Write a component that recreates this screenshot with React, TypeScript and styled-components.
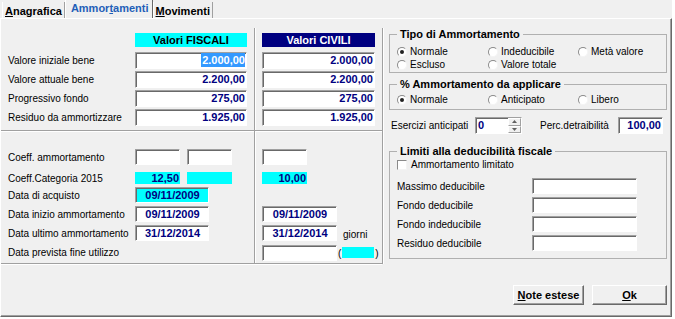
import React from "react";
import styled, { createGlobalStyle } from "styled-components";

const GlobalStyle = createGlobalStyle`
  html, body { margin: 0; padding: 0; background: #fff; }
  body {
    font-family: "Liberation Sans", Arial, sans-serif;
    font-size: 10px;
    color: #000;
  }
  * { box-sizing: border-box; }
`;

const NAVY = "#000080";
const CYAN = "#00ffff";

const Window = styled.div`
  width: 672px;
  height: 317px;
  background: #f0f0f0;
  display: flex;
  flex-direction: column;
`;

//tabs
const TabStrip = styled.div`
  height: 18px;
  display: flex;
  align-items: flex-end;
  padding-left: 2px;
`;

const Tab = styled.div<{ $active?: boolean }>`
  height: ${p => (p.$active ? 18 : 16)}px;
  padding: ${p => (p.$active ? "2px 3px 0 5px" : "3px 2px 0 2px")};
  line-height: 12px;
  font-size: 11px;
  font-weight: bold;
  white-space: nowrap;
  color: ${p => (p.$active ? "#1f5fb8" : "#000")};
  border-left: 1px solid #fff;
  border-right: 1px solid ${p => (p.$active ? "#696969" : "#a0a0a0")};
`;

const Panel = styled.div`
  flex: 1;
  display: flex;
  align-items: flex-start;
  padding-top: 9px;
  border-top: 1px solid #fff;
  border-left: 1px solid #fff;
  border-right: 1px solid #696969;
  border-bottom: 1px solid #696969;
  box-shadow: inset -1px -1px 0 #a0a0a0;
`;

//left side
const LeftSection = styled.div`
  width: 382px;
  display: flex;
  flex-direction: column;
  border-right: 1px solid #a0a0a0;
  box-shadow: 1px 0 0 #fff;
`;

const Block = styled.div<{ $gap: number; $pad: string }>`
  display: flex;
  flex-direction: column;
  gap: ${p => p.$gap}px;
  padding: ${p => p.$pad};
  border-bottom: 1px solid #a0a0a0;
  box-shadow: 0 1px 0 #fff;
  background: linear-gradient(
    to right,
    transparent 253px,
    #a0a0a0 253px,
    #a0a0a0 254px,
    #fff 254px,
    #fff 255px,
    transparent 255px
  );
`;

const Row = styled.div<{ $mb?: number }>`
  display: grid;
  grid-template-columns: 134px 127px 120px;
  align-items: center;
  margin-bottom: ${p => p.$mb ?? 0}px;
`;

const Label = styled.div`
  padding-left: 7px;
  white-space: nowrap;
  align-self: stretch;
  display: flex;
  align-items: center;
`;

const Cell = styled.div<{ $end?: boolean }>`
  display: flex;
  align-items: ${p => (p.$end ? "flex-end" : "center")};
  gap: 7px;
  align-self: stretch;
`;

const Header = styled.div<{ $dark?: boolean; $w: number }>`
  width: ${p => p.$w}px;
  height: 14px;
  line-height: 14px;
  text-align: center;
  font-size: 11px;
  font-weight: bold;
  background: ${p => (p.$dark ? NAVY : CYAN)};
  color: ${p => (p.$dark ? "#fff" : "#000")};
`;

const Field = styled.div<{ $w: number; $h?: number; $align?: string; $bg?: string }>`
  width: ${p => p.$w}px;
  height: ${p => p.$h ?? 17}px;
  line-height: ${p => (p.$h ?? 17) - 2}px;
  padding: 0 1px 0 2px;
  text-align: ${p => p.$align ?? "right"};
  font-size: 11px;
  font-weight: bold;
  color: ${NAVY};
  background: ${p => p.$bg ?? "#fff"};
  border: 1px solid;
  border-color: #a0a0a0 #fff #fff #a0a0a0;
  box-shadow: inset 1px 1px 0 #696969;
  white-space: nowrap;
  overflow: hidden;
`;

const FlatBox = styled.div<{ $w: number; $h: number }>`
  width: ${p => p.$w}px;
  height: ${p => p.$h}px;
  line-height: ${p => p.$h}px;
  background: ${CYAN};
  color: ${NAVY};
  font-size: 11px;
  font-weight: bold;
  text-align: right;
  padding-right: 1px;
`;

const Selected = styled.span`
  background: #3399ff;
  color: #fff;
  padding: 1px 0 1px 1px;
`;

const Note = styled.span<{ $ml?: number }>`
  margin-left: ${p => p.$ml ?? 0}px;
  line-height: 11px;
  margin-bottom: 1px;
`;

const Paren = styled.span`
  line-height: 14px;
  padding-top: 3px;
`;

const Inline = styled.div`
  display: flex;
  align-items: center;
  gap: 1px;
`;

//right side
const RightSection = styled.div`
  width: 278px;
  margin-left: 6px;
  display: flex;
  flex-direction: column;
`;

const Group = styled.fieldset<{ $pt: number; $pb: number; $mt: number }>`
  margin: ${p => p.$mt}px 0 0 0;
  padding: ${p => p.$pt}px 4px ${p => p.$pb}px 7px;
  border: 1px solid #b0b0b0;
  min-width: 0;
`;

const Legend = styled.legend`
  font-size: 11px;
  font-weight: bold;
  line-height: 13px;
  padding: 0 3px 0 3px;
`;

const RadioGrid = styled.div`
  display: grid;
  grid-template-columns: 91px 90px auto;
  grid-auto-rows: 13px;
`;

const Choice = styled.label`
  display: flex;
  align-items: center;
  white-space: nowrap;
  height: 13px;
`;

const RadioMark = styled.span<{ $checked?: boolean }>`
  width: 10px;
  height: 10px;
  border-radius: 50%;
  border: 1px solid;
  border-color: #8a8a8a #f4f4f4 #f4f4f4 #8a8a8a;
  background: #fff;
  display: inline-flex;
  align-items: center;
  justify-content: center;
  margin-right: 3px;
  &::after {
    content: "";
    width: 4px;
    height: 4px;
    border-radius: 50%;
    background: ${p => (p.$checked ? "#222" : "transparent")};
  }
`;

const CheckMark = styled.span`
  width: 10px;
  height: 10px;
  border: 1px solid;
  border-color: #8a8a8a #f4f4f4 #f4f4f4 #8a8a8a;
  background: #fff;
  margin-right: 4px;
`;

const InlineRow = styled.div<{ $mt: number }>`
  display: flex;
  align-items: center;
  height: 17px;
  margin-top: ${p => p.$mt}px;
  padding-left: 2px;
`;

const InlineLabel = styled.span<{ $w: number; $ml?: number }>`
  width: ${p => p.$w}px;
  margin-left: ${p => p.$ml ?? 0}px;
  white-space: nowrap;
`;

const SpinField = styled(Field)`
  display: flex;
  padding: 0;
  text-align: left;
`;

const SpinValue = styled.span`
  flex: 1;
  padding-left: 2px;
`;

const SpinButtons = styled.div`
  width: 13px;
  display: flex;
  flex-direction: column;
`;

const SpinButton = styled.div`
  flex: 1;
  display: flex;
  align-items: center;
  justify-content: center;
  background: #f0f0f0;
  border: 1px solid;
  border-color: #fff #a0a0a0 #a0a0a0 #fff;
`;

const LimitRows = styled.div`
  display: flex;
  flex-direction: column;
  gap: 3px;
  margin-top: 7px;
`;

const LimitRow = styled.div`
  display: grid;
  grid-template-columns: 135px 105px;
  align-items: center;
`;

const ButtonBar = styled.div`
  display: flex;
  justify-content: flex-end;
  gap: 8px;
  margin-top: 26px;
`;

const Button = styled.button<{ $w: number }>`
  width: ${p => p.$w}px;
  height: 20px;
  padding: 0;
  font-family: inherit;
  font-size: 11px;
  font-weight: bold;
  color: #000;
  background: #f0f0f0;
  border: 1px solid;
  border-color: #fff #696969 #696969 #fff;
  box-shadow: inset -1px -1px 0 #a0a0a0;
`;

const Arrow = ({ up }: { up?: boolean }) => (
  <svg width="5" height="3" viewBox="0 0 5 3">
    <polygon points={up ? "2.5,0 5,3 0,3" : "0,0 5,0 2.5,3"} fill="#606060" />
  </svg>
);

const Radio = ({ label, checked }: { label: string; checked?: boolean }) => (
  <Choice>
    <RadioMark $checked={checked} />
    {label}
  </Choice>
);

const topRows = [
  { label: "Valore iniziale bene", fiscal: "2.000,00", civil: "2.000,00" },
  { label: "Valore attuale bene", fiscal: "2.200,00", civil: "2.200,00" },
  { label: "Progressivo fondo", fiscal: "275,00", civil: "275,00" },
  { label: "Residuo da ammortizzare", fiscal: "1.925,00", civil: "1.925,00" },
];

const limits = ["Massimo deducibile", "Fondo deducibile", "Fondo indeducibile", "Residuo deducibile"];

export default function App() {
  return (
    <>
      <GlobalStyle />
      <Window>
        <TabStrip>
          <Tab><u>A</u>nagrafica</Tab>
          <Tab $active>Ammor<u>t</u>amenti</Tab>
          <Tab><u>M</u>ovimenti</Tab>
        </TabStrip>
        <Panel>
          <LeftSection>
            <Block $gap={2} $pad="5px 0 4px">
              <Row $mb={3}>
                <span />
                <Cell><Header $w={112}>Valori FISCALI</Header></Cell>
                <Cell><Header $w={113} $dark>Valori CIVILI</Header></Cell>
              </Row>
              {topRows.map((r, i) => (
                <Row key={r.label}>
                  <Label>{r.label}</Label>
                  <Cell>
                    <Field $w={112}>{i === 0 ? <Selected>{r.fiscal}</Selected> : r.fiscal}</Field>
                  </Cell>
                  <Cell><Field $w={113}>{r.civil}</Field></Cell>
                </Row>
              ))}
            </Block>
            <Block $gap={3} $pad="18px 0 2px">
              <Row $mb={4}>
                <Label>Coeff. ammortamento</Label>
                <Cell>
                  <Field $w={45} $h={16} />
                  <Field $w={45} $h={16} />
                </Cell>
                <Cell><Field $w={45} $h={16} /></Cell>
              </Row>
              <Row>
                <Label>Coeff.Categoria 2015</Label>
                <Cell>
                  <FlatBox $w={45} $h={12}>12,50</FlatBox>
                  <FlatBox $w={45} $h={12} />
                </Cell>
                <Cell><FlatBox $w={45} $h={12}>10,00</FlatBox></Cell>
              </Row>
              <Row>
                <Label>Data di acquisto</Label>
                <Cell><Field $w={74} $h={16} $align="center" $bg={CYAN}>09/11/2009</Field></Cell>
                <span />
              </Row>
              <Row>
                <Label>Data inizio ammortamento</Label>
                <Cell><Field $w={74} $h={16} $align="center">09/11/2009</Field></Cell>
                <Cell><Field $w={75} $h={16} $align="center">09/11/2009</Field></Cell>
              </Row>
              <Row>
                <Label>Data ultimo ammortamento</Label>
                <Cell><Field $w={74} $h={16} $align="center">31/12/2014</Field></Cell>
                <Cell $end>
                  <Field $w={75} $h={16} $align="center">31/12/2014</Field>
                  <Note $ml={-1}>giorni</Note>
                </Cell>
              </Row>
              <Row>
                <Label>Data prevista fine utilizzo</Label>
                <span />
                <Inline>
                  <Field $w={75} $h={16} />
                  <Paren>(</Paren>
                  <FlatBox $w={32} $h={11} />
                  <Paren>)</Paren>
                </Inline>
              </Row>
            </Block>
          </LeftSection>

          <RightSection>
            <Group $mt={0} $pt={4} $pb={1}>
              <Legend>Tipo di Ammortamento</Legend>
              <RadioGrid>
                <Radio label="Normale" checked />
                <Radio label="Indeducibile" />
                <Radio label="Metà valore" />
                <Radio label="Escluso" />
                <Radio label="Valore totale" />
              </RadioGrid>
            </Group>
            <Group $mt={5} $pt={2} $pb={3}>
              <Legend>% Ammortamento da applicare</Legend>
              <RadioGrid>
                <Radio label="Normale" checked />
                <Radio label="Anticipato" />
                <Radio label="Libero" />
              </RadioGrid>
            </Group>
            <InlineRow $mt={7}>
              <InlineLabel $w={84}>Esercizi anticipati</InlineLabel>
              <SpinField $w={47}>
                <SpinValue>0</SpinValue>
                <SpinButtons>
                  <SpinButton><Arrow up /></SpinButton>
                  <SpinButton><Arrow /></SpinButton>
                </SpinButtons>
              </SpinField>
              <InlineLabel $w={78} $ml={18}>Perc.detraibilità</InlineLabel>
              <Field $w={45}>100,00</Field>
            </InlineRow>
            <Group $mt={11} $pt={0} $pb={7}>
              <Legend>Limiti alla deducibilità fiscale</Legend>
              <Choice>
                <CheckMark />
                Ammortamento limitato
              </Choice>
              <LimitRows>
                {limits.map(l => (
                  <LimitRow key={l}>
                    <span>{l}</span>
                    <Field $w={105} $h={16} />
                  </LimitRow>
                ))}
              </LimitRows>
            </Group>
            <ButtonBar>
              <Button $w={71}><u>N</u>ote estese</Button>
              <Button $w={75}><u>O</u>k</Button>
            </ButtonBar>
          </RightSection>
        </Panel>
      </Window>
    </>
  );
}
